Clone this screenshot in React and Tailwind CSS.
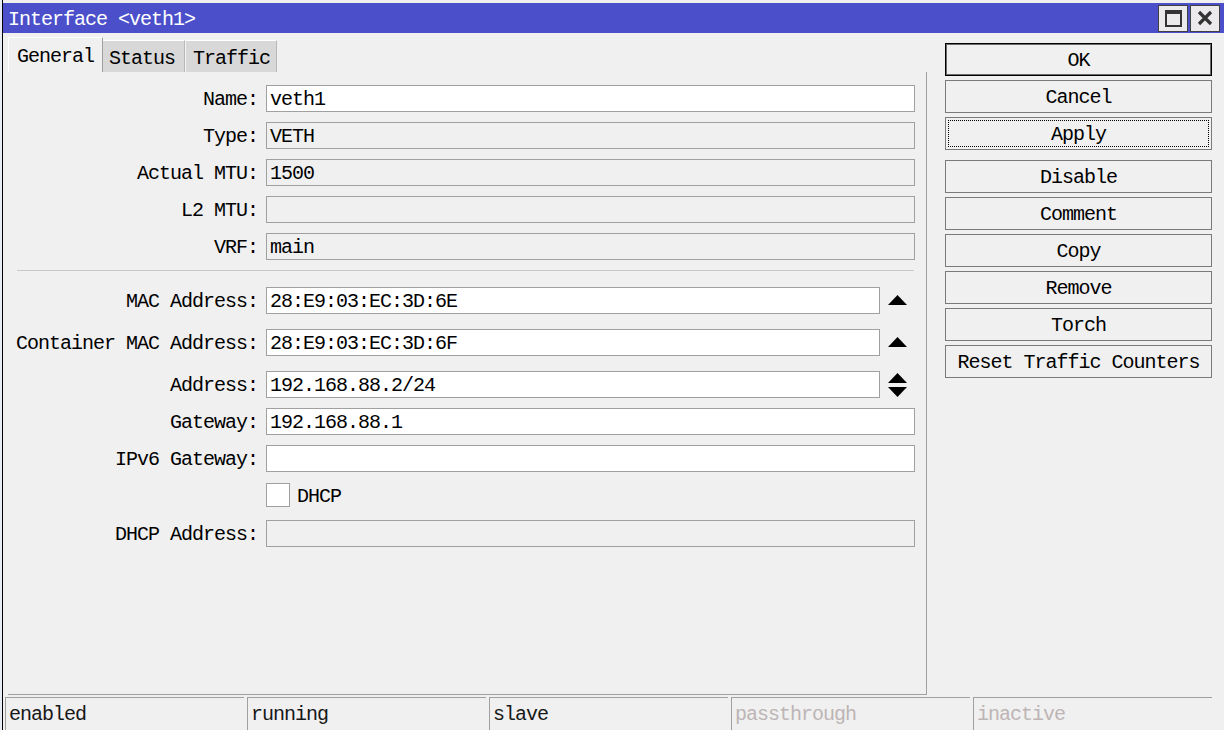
import React from "react";

const topFields = [
  { label: "Name:", value: "veth1", edit: true },
  { label: "Type:", value: "VETH" },
  { label: "Actual MTU:", value: "1500" },
  { label: "L2 MTU:", value: "" },
  { label: "VRF:", value: "main" },
];

const buttons = ["Disable", "Comment", "Copy", "Remove", "Torch", "Reset Traffic Counters"];

const status = [
  { text: "enabled", dim: false },
  { text: "running", dim: false },
  { text: "slave", dim: false },
  { text: "passthrough", dim: true },
  { text: "inactive", dim: true },
];

const Up = () => (
  <svg width="19" height="10" viewBox="0 0 19 10">
    <polygon points="9.5,0 19,10 0,10" fill="#000" />
  </svg>
);

const Down = () => (
  <svg width="19" height="10" viewBox="0 0 19 10">
    <polygon points="0,0 19,0 9.5,10" fill="#000" />
  </svg>
);

const Field = ({ label, value, edit, arrow, className = "" }) => (
  <div className={`flex items-center h-[27px] ${className}`}>
    <div className="w-[250px] text-right whitespace-pre pt-[2px]">{label}</div>
    <div className="ml-[8px] flex items-center h-full">
      <div
        className={`h-full border border-[#a0a0a0] flex items-center pl-[3px] pt-[2px] whitespace-pre ${
          edit ? "bg-white" : "bg-[#f0f0f0]"
        } ${arrow ? "w-[614px]" : "w-[649px]"}`}
      >
        {value}
      </div>
      {arrow === "up" && (
        <div className="w-[35px] flex justify-center pb-[2px]">
          <Up />
        </div>
      )}
      {arrow === "both" && (
        <div className="w-[35px] flex flex-col items-center gap-[4px]">
          <Up />
          <Down />
        </div>
      )}
    </div>
  </div>
);

const Btn = ({ children, ok, focus }) => (
  <div
    className={`h-[33px] bg-[#f0f0f0] border flex ${
      ok ? "border-black shadow-[inset_0_0_0_1px_#6a6a6a]" : "border-[#7a7a7a]"
    }`}
  >
    <div
      className={`flex-1 flex items-center justify-center pt-[3px] ${
        focus ? "m-[2px] border border-dotted border-black" : ""
      }`}
    >
      {children}
    </div>
  </div>
);

export default function App() {
  return (
    <div className="w-[1224px] h-[730px] bg-[#f0f0f0] flex text-black text-[20px] tracking-[-1px] font-['Liberation_Mono','DejaVu_Sans_Mono',monospace] overflow-hidden">
      <div className="w-[2px] bg-[#e8ecf4]" />
      <div className="flex-1 flex flex-col border-l border-black">
        <div className="h-[3px] bg-[#f0f0f0]" />
        {/* title bar */}
        <div className="h-[30px] bg-[#4b4fca] flex items-center pl-[5px] pr-[4px]">
          <div className="text-white flex-1 leading-none pt-[4px]">Interface &lt;veth1&gt;</div>
          <div className="flex gap-[2px]">
            <div className="w-[30px] h-[27px] bg-[#ece9ec] border border-[#404040] flex items-center justify-center">
              <div className="w-[17px] h-[17px] border-2 border-t-[4px] border-[#333]" />
            </div>
            <div className="w-[30px] h-[27px] bg-[#ece9ec] border border-[#404040] flex items-center justify-center">
              <svg width="16" height="16" viewBox="0 0 16 16">
                <path d="M2 2 L14 14 M14 2 L2 14" stroke="#333" strokeWidth="3.2" />
              </svg>
            </div>
          </div>
        </div>

        <div className="flex-1 flex">
          {/* left column */}
          <div className="w-[924px] pl-[5px] flex flex-col pb-[2px]">
            <div className="h-[39px] flex items-end">
              <div className="h-[35px] w-[95px] bg-[#f0f0f0] border-t border-l border-white border-r border-r-[#a0a0a0] flex items-center pl-[8px] pt-[3px]">
                General
              </div>
              <div className="h-[32px] w-[82px] bg-[#d8d8d8] border-t border-white border-r border-r-[#b8b8b8] flex items-center pl-[6px] pt-[4px]">
                Status
              </div>
              <div className="h-[32px] w-[92px] bg-[#d8d8d8] border-t border-white border-l border-l-[#f4f4f4] border-r border-r-[#b8b8b8] flex items-center pl-[7px] pt-[4px]">
                Traffic
              </div>
            </div>

            <div className="flex-1 border-r border-b border-[#a0a0a0] pt-[13px]">
              <div className="flex flex-col gap-[10px]">
                {topFields.map((f, i) => (
                  <Field key={i} {...f} />
                ))}
              </div>
              <div className="mt-[10px] ml-[9px] w-[897px] h-px bg-[#c8c8c8]" />
              <div className="mt-[16px] flex flex-col">
                <Field label="MAC Address:" value="28:E9:03:EC:3D:6E" edit arrow="up" />
                <Field
                  label="Container MAC Address:"
                  value="28:E9:03:EC:3D:6F"
                  edit
                  arrow="up"
                  className="mt-[15px]"
                />
                <Field label="Address:" value="192.168.88.2/24" edit arrow="both" className="mt-[15px]" />
                <Field label="Gateway:" value="192.168.88.1" edit className="mt-[10px]" />
                <Field label="IPv6 Gateway:" value="" edit className="mt-[10px]" />
                <div className="mt-[11px] h-[24px] flex items-center pl-[258px]">
                  <div className="w-[24px] h-[24px] bg-white border border-[#a0a0a0]" />
                  <div className="ml-[7px] pt-[4px]">DHCP</div>
                </div>
                <Field label="DHCP Address:" value="" className="mt-[13px]" />
              </div>
            </div>
          </div>

          {/* right column */}
          <div className="ml-[18px] w-[267px] pt-[10px] flex flex-col">
            <div className="flex flex-col gap-[4px]">
              <Btn ok>OK</Btn>
              <Btn>Cancel</Btn>
              <Btn focus>Apply</Btn>
            </div>
            <div className="mt-[10px] flex flex-col gap-[4px]">
              {buttons.map((b) => (
                <Btn key={b}>{b}</Btn>
              ))}
            </div>
          </div>
        </div>

        {/* status bar */}
        <div className="h-[33px] flex pl-[2px] gap-[3px]">
          {status.map((s) => (
            <div
              key={s.text}
              className={`w-[239px] border-t border-l border-[#a0a0a0] flex items-center pl-[3px] pt-[1px] ${
                s.dim ? "text-[#bdb5b5]" : "text-[#181818]"
              }`}
            >
              {s.text}
            </div>
          ))}
        </div>
      </div>
    </div>
  );
}
